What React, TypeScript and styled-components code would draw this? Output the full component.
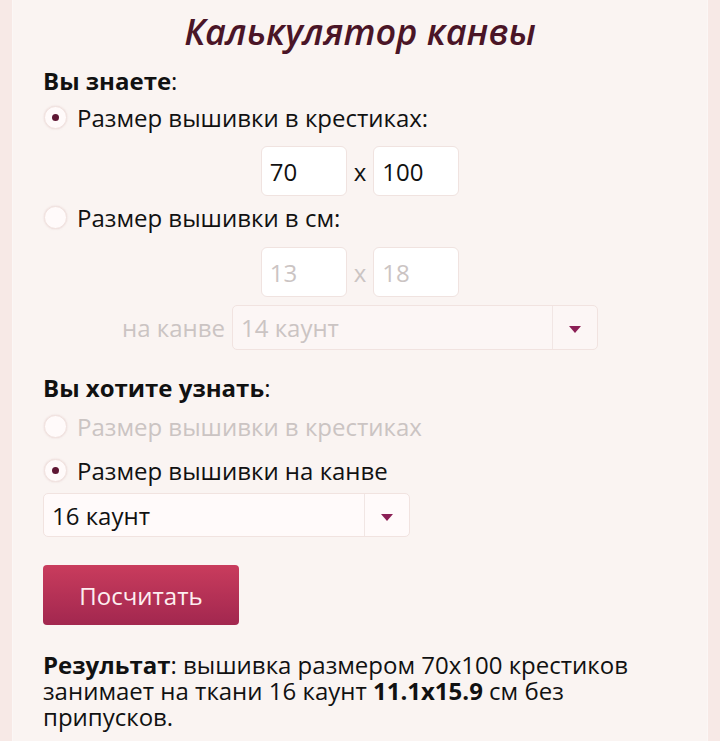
import styled, { createGlobalStyle } from "styled-components";

const GlobalStyle = createGlobalStyle`
  html, body {
    margin: 0;
    padding: 0;
    background: #f7e9e6;
  }
  body {
    font-family: "Open Sans", "Noto Sans", sans-serif;
    color: #111;
  }
`;

const Page = styled.div`
  padding: 0 12px;
  height: 741px;
  overflow: hidden;
`;

const Card = styled.div`
  background: #faf4f2;
  border-left: 1px solid #fbf7f6;
  border-right: 1px solid #fbf7f6;
  min-height: 741px;
  padding: 0 30px;
  box-sizing: border-box;
`;

const Title = styled.h1`
  margin: 0;
  height: 66px;
  line-height: 64px;
  text-align: center;
  font-size: 36px;
  font-style: italic;
  font-weight: 600;
  color: #4a1527;
`;

const Heading = styled.div<{ $top?: number }>`
  height: 30px;
  line-height: 30px;
  font-size: 24px;
  margin-top: ${(p) => p.$top ?? 0}px;

  b {
    font-weight: 700;
  }
`;

const RadioRow = styled.label<{ $height?: number; $top?: number; $disabled?: boolean }>`
  display: flex;
  align-items: center;
  gap: 10px;
  height: ${(p) => p.$height ?? 42}px;
  margin-top: ${(p) => p.$top ?? 0}px;
  font-size: 24px;
  color: ${(p) => (p.$disabled ? "#cbc4c3" : "#111")};
`;

const Radio = styled.span<{ $checked?: boolean }>`
  width: 23px;
  height: 23px;
  border-radius: 50%;
  background: #fffafa;
  border: 1px solid #f1e2df;
  box-shadow: 0 0 2px rgba(200, 160, 160, 0.35);
  box-sizing: border-box;
  display: flex;
  align-items: center;
  justify-content: center;
  margin-left: 1px;
  flex: none;

  &::after {
    content: "";
    display: ${(p) => (p.$checked ? "block" : "none")};
    width: 7px;
    height: 7px;
    border-radius: 50%;
    background: #5e1633;
  }
`;

const CenterRow = styled.div<{ $top?: number; $height: number }>`
  display: flex;
  justify-content: center;
  align-items: center;
  gap: 7px;
  margin-top: ${(p) => p.$top ?? 0}px;
  height: ${(p) => p.$height}px;
`;

const NumBox = styled.div<{ $disabled?: boolean }>`
  width: 86px;
  height: 50px;
  box-sizing: border-box;
  border: 1px solid #f0e3e0;
  border-radius: 6px;
  background: #fff;
  padding-left: 8px;
  display: flex;
  align-items: center;
  font-size: 24px;
  color: ${(p) => (p.$disabled ? "#cbc4c3" : "#111")};
`;

const Times = styled.span<{ $disabled?: boolean }>`
  font-size: 24px;
  color: ${(p) => (p.$disabled ? "#cbc4c3" : "#111")};
`;

const Caption = styled.span`
  font-size: 24px;
  color: #cbc4c3;
`;

const Select = styled.div<{ $width: number; $height: number; $top?: number; $disabled?: boolean }>`
  width: ${(p) => p.$width}px;
  height: ${(p) => p.$height}px;
  margin-top: ${(p) => p.$top ?? 0}px;
  box-sizing: border-box;
  border: 1px solid #f1e3e0;
  border-radius: 5px;
  background: ${(p) => (p.$disabled ? "#fcf6f5" : "#fffafa")};
  display: flex;
  align-items: stretch;
  font-size: 24px;
  color: ${(p) => (p.$disabled ? "#cbc4c3" : "#111")};
`;

const SelectValue = styled.span`
  flex: 1;
  display: flex;
  align-items: center;
  padding-left: 8px;
`;

const SelectArrow = styled.span`
  width: 45px;
  border-left: 1px solid #f1e6e4;
  display: flex;
  align-items: center;
  justify-content: center;
  padding-top: 4px;
  box-sizing: border-box;

  &::after {
    content: "";
    width: 0;
    height: 0;
    border-left: 6px solid transparent;
    border-right: 6px solid transparent;
    border-top: 7px solid #8b1f55;
  }
`;

const Button = styled.button`
  display: block;
  margin-top: 28px;
  width: 196px;
  height: 60px;
  border: none;
  border-radius: 4px;
  background: linear-gradient(#c93c5d, #a2274f);
  color: #fdeef0;
  font-family: inherit;
  font-size: 24px;
  padding: 0;
`;

const Result = styled.p`
  margin: 27px 0 0;
  font-size: 24px;
  line-height: 26px;
  color: #111;

  b {
    font-weight: 700;
  }
`;

export default function App() {
  return (
    <>
      <GlobalStyle />
      <Page>
        <Card>
          <Title>Калькулятор канвы</Title>

          <Heading>
            <b>Вы знаете</b>:
          </Heading>
          <RadioRow>
            <Radio $checked />
            Размер вышивки в крестиках:
          </RadioRow>
          <CenterRow $top={8} $height={50}>
            <NumBox>70</NumBox>
            <Times>x</Times>
            <NumBox>100</NumBox>
          </CenterRow>
          <RadioRow>
            <Radio />
            Размер вышивки в см:
          </RadioRow>
          <CenterRow $top={9} $height={50}>
            <NumBox $disabled>13</NumBox>
            <Times $disabled>x</Times>
            <NumBox $disabled>18</NumBox>
          </CenterRow>
          <CenterRow $top={8} $height={45}>
            <Caption>на канве</Caption>
            <Select $width={366} $height={45} $disabled>
              <SelectValue>14 каунт</SelectValue>
              <SelectArrow />
            </Select>
          </CenterRow>

          <Heading $top={23}>
            <b>Вы хотите узнать</b>:
          </Heading>
          <RadioRow $height={44} $top={1} $disabled>
            <Radio />
            Размер вышивки в крестиках
          </RadioRow>
          <RadioRow $height={44}>
            <Radio $checked />
            Размер вышивки на канве
          </RadioRow>
          <Select $width={367} $height={44} $top={1}>
            <SelectValue>16 каунт</SelectValue>
            <SelectArrow />
          </Select>

          <Button>Посчитать</Button>

          <Result>
            <b>Результат</b>: вышивка размером 70x100 крестиков занимает на
            ткани 16 каунт <b>11.1x15.9</b> см без припусков.
          </Result>
        </Card>
      </Page>
    </>
  );
}
